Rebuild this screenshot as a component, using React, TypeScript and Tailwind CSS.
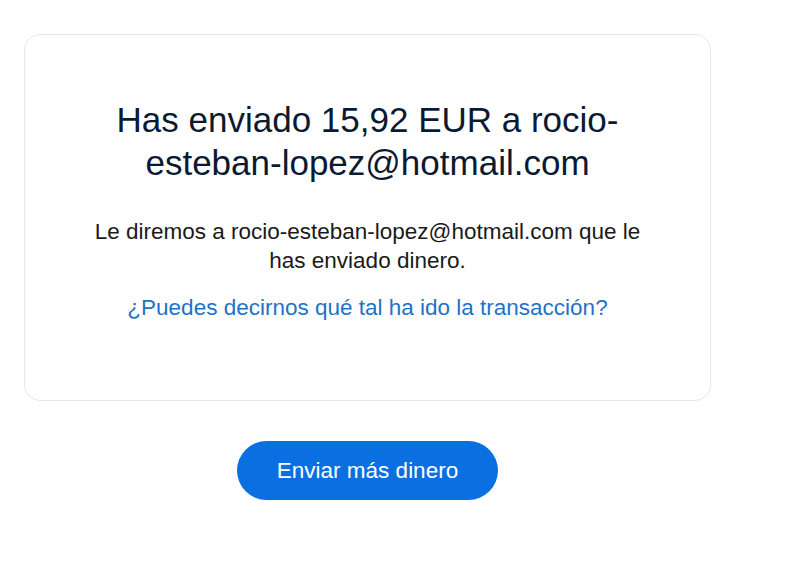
import React from "react";

export default function App() {
  return (
    <div
      className="min-h-[580px] w-[786px] bg-white pt-[34px] pl-6"
      style={{ fontFamily: '"Liberation Sans", Arial, sans-serif' }}
    >
      <div className="flex w-[687px] flex-col">
        <div className="flex flex-col items-center rounded-2xl border border-[#e6e6e6] bg-white px-[58px] pt-[63px] pb-[78px] text-center">
          <h1 className="text-[35px] leading-[43px] font-normal text-[#0b1a33]">
            Has enviado 15,92 EUR a rocio-esteban-lopez@hotmail.com
          </h1>
          <p className="mt-[33px] text-[22.5px] leading-[29px] text-[#1a1a1a]">
            Le diremos a rocio-esteban-lopez@hotmail.com que le has enviado dinero.
          </p>
          <a className="mt-[18px] cursor-pointer text-[22.5px] leading-[29px] text-[#1f72c8]">
            ¿Puedes decirnos qué tal ha ido la transacción?
          </a>
        </div>
        <div className="mt-[40px] flex justify-center">
          <button className="h-[59px] w-[261px] rounded-full bg-[#0a6fe0] text-[22.5px] text-white">
            Enviar más dinero
          </button>
        </div>
      </div>
    </div>
  );
}
